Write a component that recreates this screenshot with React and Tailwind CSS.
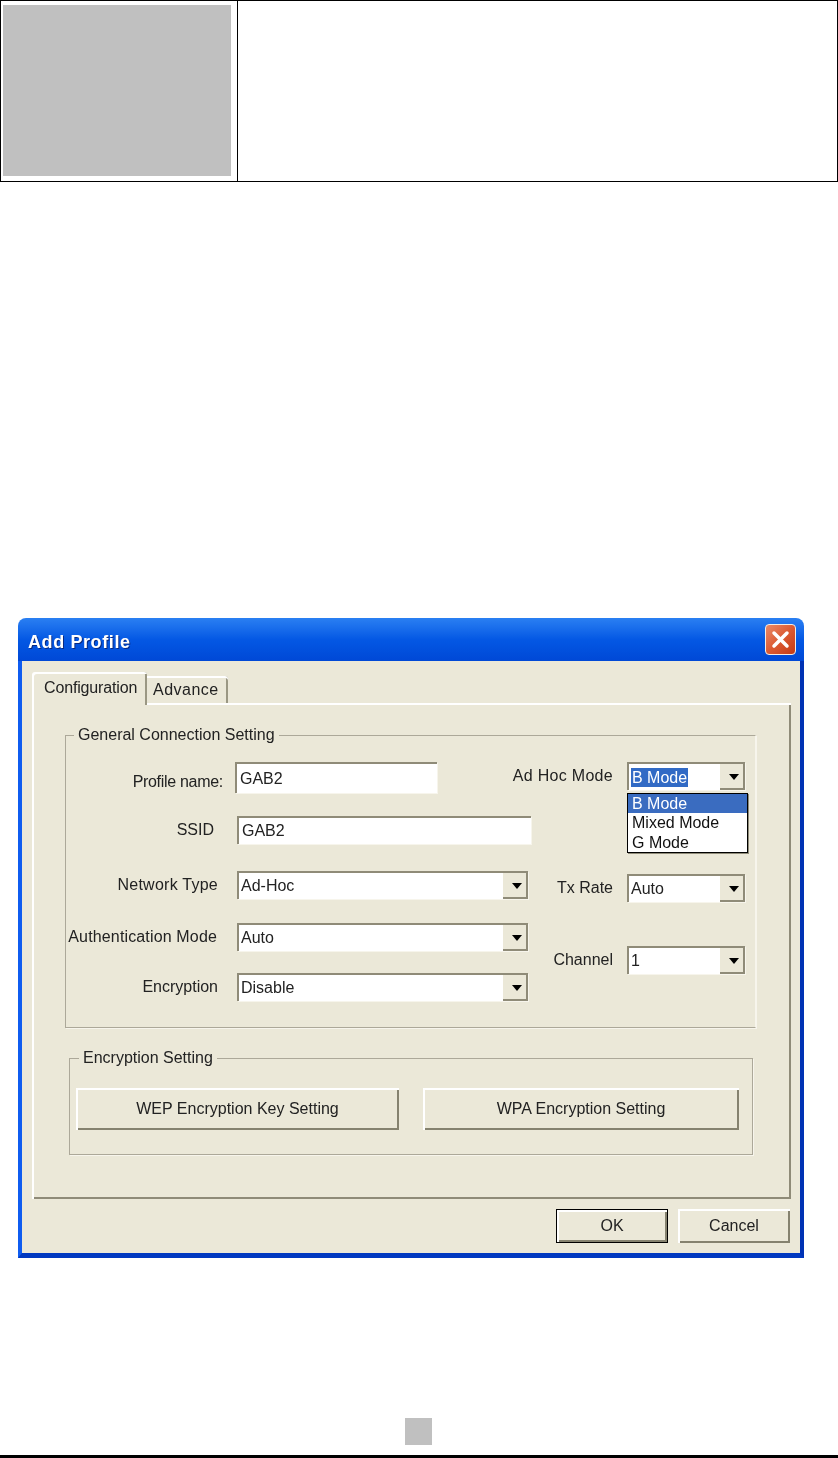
function DropArrow() {
  return (
    <div className="ml-auto w-[25px] h-full pl-[2px] flex items-center justify-center bg-[#ebe8d8] shadow-[inset_-2px_-2px_0_#8f8b78]">
      <svg width="10" height="6" viewBox="0 0 10 6"><path d="M0 0h10L5 6z" fill="#000" /></svg>
    </div>
  )
}

// Sunken white XP combo box
function Combo({ value, className = "", children }) {
  return (
    <div className={`h-7 flex items-center bg-white border-t-2 border-l-2 border-[#8f8b78] shadow-[1px_1px_0_#f7f5ec] ${className}`}>
      {children || <span className="pl-[2px] leading-none">{value}</span>}
      <DropArrow />
    </div>
  )
}

function TextField({ value, className = "" }) {
  return (
    <div className={`flex items-center bg-white border-t-2 border-l-2 border-[#8f8b78] shadow-[1px_1px_0_#f7f5ec] ${className}`}>
      <span className="pl-[3px] leading-none">{value}</span>
    </div>
  )
}

function Legend({ text, className = "" }) {
  return <div className={`w-fit h-5 -mt-[11px] px-1 bg-[#ebe8d8] leading-5 ${className}`}>{text}</div>
}

function RaisedButton({ children, className = "" }) {
  return (
    <div className={`flex items-center justify-center bg-[#ebe8d8] shadow-[inset_2px_2px_0_#ffffff,inset_-2px_-2px_0_#85826f] ${className}`}>
      {children}
    </div>
  )
}

export default function App() {
  return (
    <div className="w-[838px] h-[1458px] bg-white text-[16px] text-[#222] overflow-hidden font-['Liberation_Sans',Arial,sans-serif]">
      {/* Top table */}
      <div className="w-[838px] h-[182px] flex border border-black">
        <div className="w-[237px] h-full shrink-0 border-r border-black pl-[2px] pt-1">
          <div className="w-[228px] h-[171px] bg-[#c0c0c0]"></div>
        </div>
      </div>

      {/* Add Profile dialog */}
      <div className="w-[786px] h-[640px] ml-[18px] mt-[436px] flex flex-col blur-[0.5px]">
        <div className="h-[43px] shrink-0 flex items-center pl-[10px] pr-[8px] rounded-t-[8px] bg-gradient-to-b from-[#2a7ff2] via-[#0458e4] to-[#0048d6]">
          <span className="pt-[5px] text-white font-bold text-[18px] tracking-[0.6px] [text-shadow:1px_1px_0_#0a2a80]">Add Profile</span>
          <div className="ml-auto w-[31px] h-[31px] flex items-center justify-center rounded-[4px] border border-[#f4ece4] bg-gradient-to-br from-[#e98a68] via-[#dc5a32] to-[#c43a14]">
            <svg width="19" height="19" viewBox="0 0 19 19"><path d="M3 3l13 13M16 3L3 16" stroke="#fff" strokeWidth="3.500" strokeLinecap="round" /></svg>
          </div>
        </div>

        <div className="flex-1 flex flex-col bg-[#ebe8d8] border-l-4 border-r-4 border-b-[5px] border-l-[#0f5cf0] border-r-[#0032b4] border-b-[#0038c0]">
          {/* Tabs */}
          <div className="ml-[10px] mt-[11px] -mb-[2px] h-[33px] flex items-start">
            <div className="relative z-10 w-[115px] h-[33px] pl-[12px] pt-[4px] tracking-[-0.15px] bg-[#ebe8d8] rounded-t-[3px] shadow-[inset_2px_2px_0_#ffffff,inset_-2px_0_0_#9a9783]">Configuration</div>
            <div className="w-[81px] h-[27px] mt-1 pl-[6px] pt-[2px] tracking-[0.5px] rounded-tr-[3px] shadow-[inset_0_2px_0_#ffffff,inset_-2px_0_0_#9a9783]">Advance</div>
          </div>

          {/* Tab panel */}
          <div className="w-[759px] h-[496px] ml-[10px] shrink-0 pl-[2px] pt-[2px] shadow-[inset_2px_2px_0_#ffffff,inset_-2px_-2px_0_#8f8b78]">
            <div className="w-[691px] h-[293px] ml-[31px] mt-[30px] border border-[#aca899] border-r-[#f7f5ec] shadow-[1px_1px_0_#f7f5ec]">
              <Legend text="General Connection Setting" className="ml-[8px]" />
              <div className="mt-[17px] flex">
                <div className="w-[466px] shrink-0 flex flex-col">
                  <div className="flex items-start">
                    <span className="w-[157px] mt-2 text-right whitespace-nowrap tracking-[-0.3px]">Profile name:</span>
                    <TextField value="GAB2" className="ml-[12px] w-[202px] h-[31px]" />
                  </div>
                  <div className="mt-[22px] flex items-center">
                    <span className="w-[148px] text-right">SSID</span>
                    <TextField value="GAB2" className="ml-[23px] w-[294px] h-7" />
                  </div>
                  <div className="mt-[27px] flex items-center">
                    <span className="w-[152px] text-right whitespace-nowrap tracking-[0.25px]">Network Type</span>
                    <Combo value="Ad-Hoc" className="ml-[19px] w-[291px]" />
                  </div>
                  <div className="mt-[24px] flex items-center">
                    <span className="w-[151px] text-right whitespace-nowrap tracking-[0.15px]">Authentication Mode</span>
                    <Combo value="Auto" className="ml-[20px] w-[291px]" />
                  </div>
                  <div className="mt-[22px] flex items-center">
                    <span className="w-[152px] text-right">Encryption</span>
                    <Combo value="Disable" className="ml-[19px] w-[291px]" />
                  </div>
                </div>

                <div className="w-[213px] flex flex-col">
                  <div className="flex items-center justify-end gap-[14px] whitespace-nowrap">
                    <span className="tracking-[0.3px]">Ad Hoc Mode</span>
                    <div className="relative w-[118px] shrink-0">
                      <Combo>
                        <span className="ml-[2px] px-[1px] h-[19px] leading-[19px] bg-[#316ac5] text-white">B Mode</span>
                      </Combo>
                      {/* Open dropdown list */}
                      <div className="absolute left-0 top-[31px] z-20 w-[121px] h-[60px] bg-white border border-black text-[#111] shadow-[1px_1px_0_#8f8b78]">
                        <div className="h-[19px] leading-[19px] pl-[4px] bg-[#3a6cc0] text-white">B Mode</div>
                        <div className="h-5 leading-5 pl-[4px]">Mixed Mode</div>
                        <div className="h-5 leading-5 pl-[4px]">G Mode</div>
                      </div>
                    </div>
                  </div>
                  <div className="mt-[84px] flex items-center justify-end gap-[14px]">
                    <span>Tx Rate</span>
                    <Combo value="Auto" className="w-[118px]" />
                  </div>
                  <div className="mt-[44px] flex items-center justify-end gap-[14px]">
                    <span>Channel</span>
                    <Combo value="1" className="w-[118px]" />
                  </div>
                </div>
              </div>
            </div>

            <div className="w-[684px] h-[97px] ml-[35px] mt-[30px] border border-[#aca899] shadow-[1px_1px_0_#f7f5ec]">
              <Legend text="Encryption Setting" className="ml-[9px]" />
              <div className="mt-[20px] pl-[6px] flex gap-[24px]">
                <RaisedButton className="w-[323px] h-[42px]">WEP Encryption Key Setting</RaisedButton>
                <RaisedButton className="w-[316px] h-[42px]">WPA Encryption Setting</RaisedButton>
              </div>
            </div>
          </div>

          <div className="mt-[10px] pr-[10px] flex justify-end gap-[10px]">
            <div className="w-[112px] h-[34px] border border-black">
              <RaisedButton className="w-full h-full">OK</RaisedButton>
            </div>
            <RaisedButton className="w-[112px] h-[34px]">Cancel</RaisedButton>
          </div>
        </div>
      </div>

      {/* Footer */}
      <div className="w-[27px] h-[27px] ml-[405px] mt-[160px] bg-[#c0c0c0]"></div>
      <div className="h-[3px] mt-[10px] bg-black"></div>
    </div>
  )
}
